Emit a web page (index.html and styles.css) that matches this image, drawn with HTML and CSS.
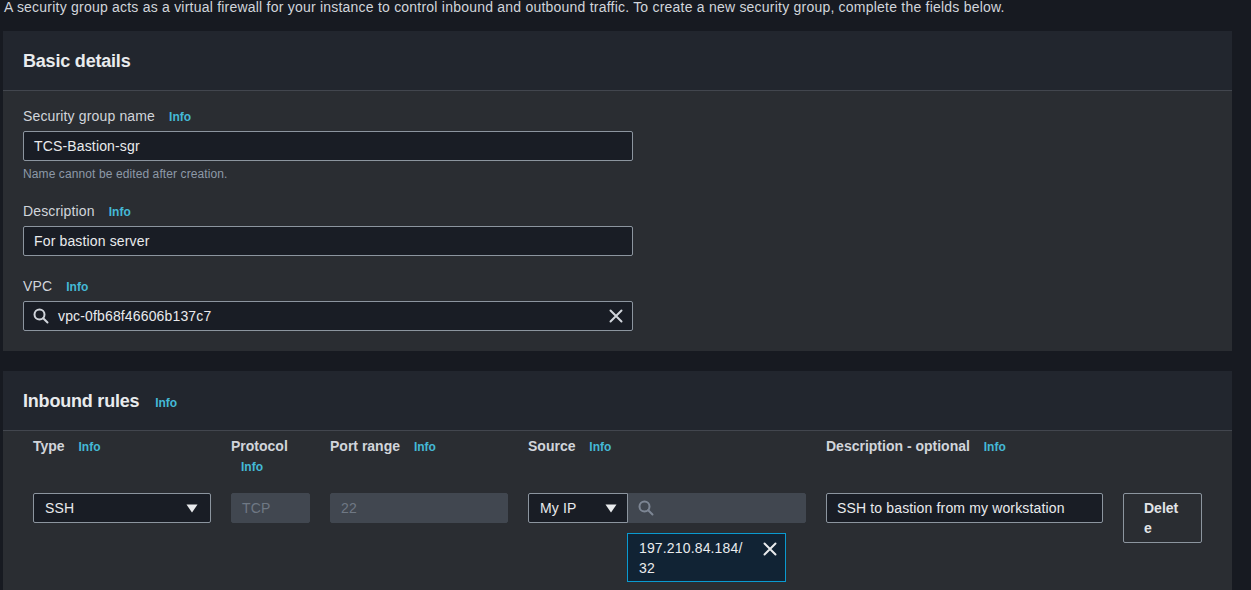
FILE: index.html
```html
<!DOCTYPE html>
<html lang="en">
<head>
<meta charset="utf-8">
<title>Create security group</title>
<link rel="stylesheet" href="styles.css">
</head>
<body>
<p class="intro">A security group acts as a virtual firewall for your instance to control inbound and outbound traffic. To create a new security group, complete the fields below.</p>

<section class="panel">
  <header class="panel-head"><h2>Basic details</h2></header>
  <div class="panel-body fields">
    <div class="field">
      <div class="label">Security group name <a class="info">Info</a></div>
      <div class="input"><span>TCS-Bastion-sgr</span></div>
      <div class="hint">Name cannot be edited after creation.</div>
    </div>
    <div class="field">
      <div class="label">Description <a class="info">Info</a></div>
      <div class="input"><span>For bastion server</span></div>
    </div>
    <div class="field">
      <div class="label">VPC <a class="info">Info</a></div>
      <div class="input search">
        <svg class="icon-search" viewBox="0 0 16 16" width="16" height="16"><circle cx="6.5" cy="6.5" r="5" fill="none" stroke="#d1d5db" stroke-width="2"/><line x1="10.2" y1="10.2" x2="14.5" y2="14.5" stroke="#d1d5db" stroke-width="2" stroke-linecap="round"/></svg>
        <span class="grow">vpc-0fb68f46606b137c7</span>
        <svg class="icon-x" viewBox="0 0 14 14" width="14" height="14"><path d="M1.5 1.5 L12.5 12.5 M12.5 1.5 L1.5 12.5" stroke="#d1d5db" stroke-width="2" stroke-linecap="round"/></svg>
      </div>
    </div>
  </div>
</section>

<section class="panel panel-rules">
  <header class="panel-head"><h2>Inbound rules <a class="info info-lg">Info</a></h2></header>
  <div class="panel-body rules">
    <div class="col-head">Type <a class="info">Info</a></div>
    <div class="col-head">Protocol <a class="info">Info</a></div>
    <div class="col-head">Port range <a class="info">Info</a></div>
    <div class="col-head">Source <a class="info">Info</a></div>
    <div class="col-head">Description - optional <a class="info">Info</a></div>
    <div class="col-head"></div>

    <div class="select">
      <span class="grow">SSH</span>
      <svg class="caret" viewBox="0 0 12 9" width="12" height="9"><path d="M0.5 0.5 H11.5 L6 8.5 Z" fill="#e9ebed"/></svg>
    </div>
    <div class="input disabled"><span>TCP</span></div>
    <div class="input disabled"><span>22</span></div>
    <div class="source">
      <div class="source-row">
        <div class="select select-src">
          <span class="grow">My IP</span>
          <svg class="caret" viewBox="0 0 12 9" width="12" height="9"><path d="M0.5 0.5 H11.5 L6 8.5 Z" fill="#e9ebed"/></svg>
        </div>
        <div class="input disabled search-dis">
          <svg viewBox="0 0 16 16" width="16" height="16"><circle cx="6.5" cy="6.5" r="5" fill="none" stroke="#7d8694" stroke-width="2"/><line x1="10.2" y1="10.2" x2="14.5" y2="14.5" stroke="#7d8694" stroke-width="2" stroke-linecap="round"/></svg>
        </div>
      </div>
      <div class="token">
        <span class="token-text">197.210.84.184/<br>32</span>
        <svg class="token-x" viewBox="0 0 14 14" width="14" height="14"><path d="M1.5 1.5 L12.5 12.5 M12.5 1.5 L1.5 12.5" stroke="#e9ebed" stroke-width="2" stroke-linecap="round"/></svg>
      </div>
    </div>
    <div class="input"><span>SSH to bastion from my workstation</span></div>
    <div><button class="btn">Delete</button></div>
  </div>
</section>
</body>
</html>
```

FILE: styles.css
```css
* { box-sizing: border-box; }

html, body {
  margin: 0;
  padding: 0;
  background: #171a21;
  color: #d1d5db;
  font-family: "Liberation Sans", Arial, sans-serif;
  font-size: 14px;
  letter-spacing: 0.15px;
  overflow: hidden;
}

.intro {
  margin: 0 0 17px 0;
  padding-left: 4px;
  line-height: 14px;
  font-size: 14px;
  letter-spacing: 0.22px;
  color: #d1d5db;
  white-space: nowrap;
}

.panel {
  margin-left: 3px;
  width: 1229px;
  background: #2a2d32;
}

.panel-rules {
  margin-top: 20px;
}

.panel-head {
  height: 60px;
  padding-left: 20px;
  display: flex;
  align-items: center;
  background: #22262e;
  border-bottom: 1px solid #42464e;
}

.panel-head h2 {
  margin: 0;
  font-size: 18px;
  font-weight: 700;
  letter-spacing: -0.2px;
  color: #e9ebed;
  line-height: 22px;
}

.info {
  font-size: 12px;
  font-weight: 700;
  letter-spacing: 0;
  line-height: 14px;
  color: #44b9d6;
  display: inline-block;
  padding-left: 10px;
}

.info-lg {
  padding-left: 11px;
}

.fields {
  padding: 14px 20px 20px 20px;
  display: flex;
  flex-direction: column;
  gap: 19px;
}

.field {
  width: 610px;
}

.label {
  line-height: 22px;
  height: 22px;
  margin-bottom: 4px;
  color: #d1d5db;
}

.input {
  height: 30px;
  border: 1px solid #8c959f;
  border-radius: 2px;
  background: #191d25;
  display: flex;
  align-items: center;
  padding: 0 10px;
  color: #e9ebed;
  white-space: nowrap;
}

.hint {
  margin-top: 5px;
  margin-bottom: -1px;
  font-size: 12px;
  line-height: 16px;
  letter-spacing: 0.1px;
  color: #8d99a8;
}

.search {
  padding-left: 9px;
  padding-right: 9px;
}

.icon-search {
  margin-right: 9px;
  flex: none;
}

.grow {
  flex: 1;
}

.icon-x {
  flex: none;
}

.rules {
  padding: 5px 30px 60px 30px;
  display: grid;
  grid-template-columns: 178px 79px 178px 278px 277px 79px;
  column-gap: 20px;
  row-gap: 17px;
  align-items: start;
}

.col-head {
  font-weight: 700;
  letter-spacing: 0;
  line-height: 20px;
  height: 40px;
  color: #d1d5db;
}

.select {
  height: 30px;
  border: 1px solid #8c959f;
  border-radius: 2px;
  background: #191d25;
  display: flex;
  align-items: center;
  padding: 0 12px 0 11px;
  color: #e9ebed;
}

.caret {
  flex: none;
}

.disabled {
  background: #414750;
  border-color: #414750;
  color: #6f7884;
}

.source-row {
  display: flex;
}

.select-src {
  width: 100px;
  flex: none;
  border-radius: 2px 0 0 2px;
  padding-right: 10px;
}

.search-dis {
  flex: 1;
  border-radius: 0 2px 2px 0;
  padding-left: 9px;
}

.token {
  margin-top: 10px;
  margin-left: 99px;
  width: 159px;
  height: 49px;
  border: 1px solid #0a9ad0;
  background: #112334;
  display: flex;
  align-items: flex-start;
  padding: 4px 8px 0 11px;
}

.token-text {
  flex: 1;
  line-height: 20px;
  color: #e9ebed;
}

.token-x {
  margin-top: 4px;
  flex: none;
}

.btn {
  width: 79px;
  height: 50px;
  border: 1px solid #8c959f;
  border-radius: 2px;
  background: transparent;
  color: #e1e4e8;
  font-family: "Liberation Sans", Arial, sans-serif;
  font-size: 14px;
  font-weight: 700;
  line-height: 20px;
  text-align: left;
  padding: 4px 20px;
  word-break: break-all;
}
```
